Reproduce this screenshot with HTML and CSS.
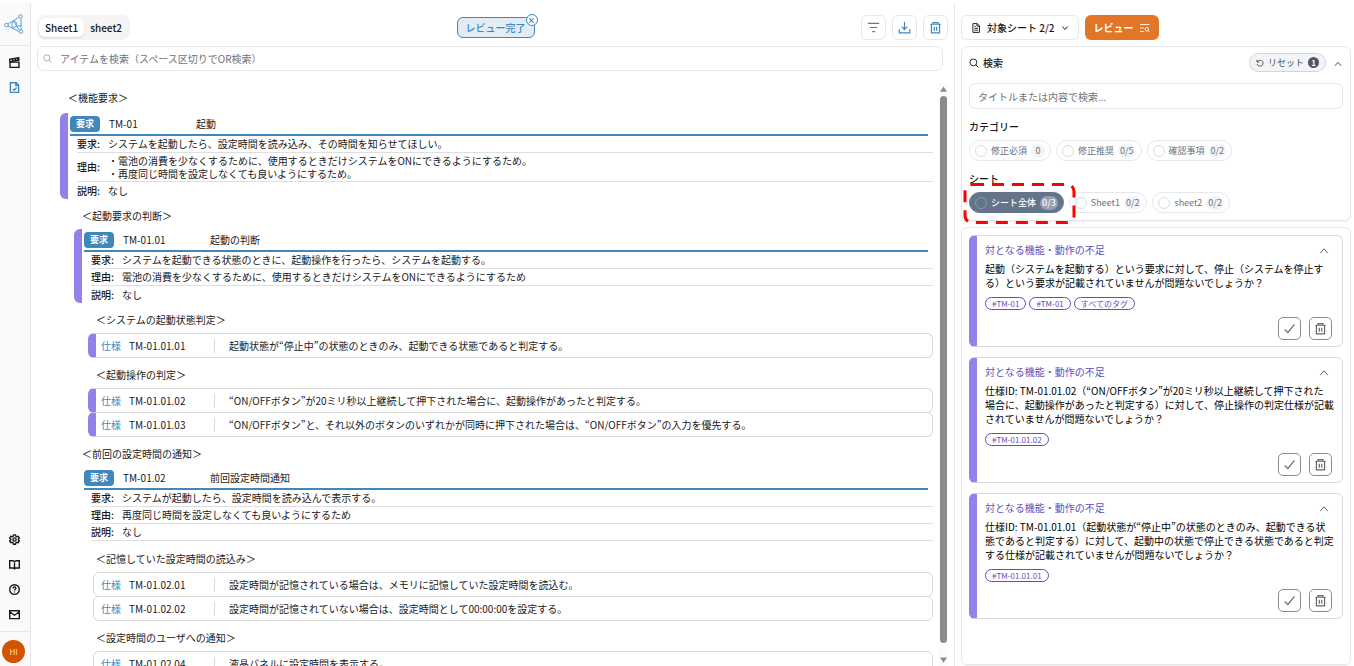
FILE: index.html
```html
<!DOCTYPE html>
<html lang="ja">
<head>
<meta charset="utf-8">
<title>レビュー</title>
<link rel="stylesheet" href="styles.css">
</head>
<body>
<svg class="defs" aria-hidden="true">
  <symbol id="i-trash" viewBox="0 0 16 16"><path d="M1.500 4h13M5 4V2h6v2M3 4v10.500h10V4M6.500 7v5M9.500 7v5"/></symbol>
  <symbol id="i-check" viewBox="0 0 16 16"><path d="M2 9l4 4 8-10"/></symbol>
  <symbol id="i-up" viewBox="0 0 16 16"><path d="M2 11.500l6-7 6 7"/></symbol>
  <symbol id="i-search" viewBox="0 0 16 16"><circle cx="7" cy="7" r="5.500"/><path d="M11 11l4 4"/></symbol>
</svg>
<div class="app">
  <nav class="rail" aria-label="メニュー">
    <a class="logo" href="#" aria-label="ホーム">
      <svg class="logo-svg" viewBox="0 0 20 20"><path d="M4 10L14.500 3.500M17 4.500v11.500M4 12l11 5.500M9 7.500a5 5 0 0 0 0 6.500M9 7.500c3-1 4 1 3.500 4.500L9 14M12.500 12H17M10 7l2.500 5 3 4.500"/><circle cx="2.500" cy="11" r="1.800"/><circle cx="16.500" cy="2.500" r="1.800"/><circle cx="17" cy="17.500" r="1.800"/></svg>
    </a>
    <a class="rail-item" href="#" aria-label="プロジェクト"><svg class="ico" viewBox="0 0 16 16"><path d="M1.500 7.500h13V15h-13z"/><path d="M1.500 7L1 3.500 14 1l.6 3.200z"/><path d="M4 3l2.500 3M8 2.200l2.500 3M11.500 1.600l2 2.800"/></svg></a>
    <a class="rail-item rail-active" href="#" aria-label="レビュー"><svg class="ico" viewBox="0 0 16 16"><path d="M2 1h8.500L14 4.500V15H2zM10 1v4h4M5.500 10l2 2 3.500-4"/></svg></a>
    <div class="rail-bottom">
      <a class="rail-item" href="#" aria-label="設定"><svg class="ico" viewBox="0 0 16 16"><circle cx="8" cy="8" r="2.300"/><path d="M6.500 1.200h3l.5 2 1.500.9 2-.6 1.500 2.600L13.500 7.500v1L15 10l-1.500 2.600-2-.6-1.500.9-.5 2h-3l-.5-2-1.500-.9-2 .6L1 10l1.500-1.500v-1L1 6l1.500-2.600 2 .6L6 3.200z"/></svg></a>
      <a class="rail-item" href="#" aria-label="マニュアル"><svg class="ico" viewBox="0 0 16 16"><path d="M1 2.500h5l2 1.500 2-1.500h5v10.500H10l-2 1.500L6 13H1zM8 4v10.500"/></svg></a>
      <a class="rail-item" href="#" aria-label="ヘルプ"><svg class="ico" viewBox="0 0 16 16"><circle cx="8" cy="8" r="7"/><path d="M6 6.500c0-3 4-2.500 4 0C10 8 8 8 8 9.500M8 11v1.300"/></svg></a>
      <a class="rail-item" href="#" aria-label="お問い合わせ"><svg class="ico" viewBox="0 0 16 16"><path d="M1 2.500h14V14H1zM1 4l7 5 7-5"/></svg></a>
      <div class="user"><button class="avatar" type="button">HI</button></div>
    </div>
  </nav>

  <main class="main">
    <header class="bar">
      <div class="tabs" role="tablist">
        <button class="tab tab-on" type="button" role="tab" aria-selected="true">Sheet1</button>
        <button class="tab" type="button" role="tab" aria-selected="false">sheet2</button>
      </div>
      <div class="status">
        <button class="status-btn" type="button">レビュー完了</button>
        <button class="status-x" type="button" aria-label="閉じる"><svg class="x-ico" viewBox="0 0 10 10"><path d="M2 2l6 6M8 2L2 8"/></svg></button>
      </div>
      <div class="tools">
        <button class="tool" type="button" aria-label="絞り込み"><svg class="tool-ico" viewBox="0 0 16 16"><path d="M1 3h14M3.500 8h9M6.500 13h3.500"/></svg></button>
        <button class="tool" type="button" aria-label="ダウンロード"><svg class="tool-ico" viewBox="0 0 16 16"><path d="M8 1v9M4.500 7L8 10.500 11.500 7M1.500 10v4.500h13V10"/></svg></button>
        <button class="tool" type="button" aria-label="削除"><svg class="tool-ico"><use href="#i-trash"/></svg></button>
      </div>
    </header>
    <label class="find">
      <svg class="find-ico"><use href="#i-search"/></svg>
      <input class="find-input" type="text" aria-label="アイテムを検索" placeholder="アイテムを検索（スペース区切りでOR検索）">
    </label>
    <div class="viewport">
      <div class="doc">
        <h2 class="group">＜機能要求＞</h2>
        <section class="req marked">
          <div class="req-head"><span class="badge">要求</span><span class="req-id">TM-01</span><span>起動</span></div>
          <div class="field"><span class="key">要求:</span><span>システムを起動したら、設定時間を読み込み、その時間を知らせてほしい。</span></div>
          <div class="field"><span class="key">理由:</span><span class="multi">・電池の消費を少なくするために、使用するときだけシステムをONにできるようにするため。<br>・再度同じ時間を設定しなくても良いようにするため。</span></div>
          <div class="field"><span class="key">説明:</span><span>なし</span></div>
        </section>
        <div class="level">
          <h3 class="group">＜起動要求の判断＞</h3>
          <section class="req marked">
            <div class="req-head"><span class="badge">要求</span><span class="req-id">TM-01.01</span><span>起動の判断</span></div>
            <div class="field"><span class="key">要求:</span><span>システムを起動できる状態のときに、起動操作を行ったら、システムを起動する。</span></div>
            <div class="field"><span class="key">理由:</span><span>電池の消費を少なくするために、使用するときだけシステムをONにできるようにするため</span></div>
            <div class="field"><span class="key">説明:</span><span>なし</span></div>
          </section>
          <div class="level">
            <h4 class="group">＜システムの起動状態判定＞</h4>
            <div class="spec spec-marked"><span class="kind">仕様</span><span class="spec-id">TM-01.01.01</span><span class="spec-text">起動状態が“停止中”の状態のときのみ、起動できる状態であると判定する。</span></div>
            <h4 class="group">＜起動操作の判定＞</h4>
            <div class="spec spec-marked"><span class="kind">仕様</span><span class="spec-id">TM-01.01.02</span><span class="spec-text">“ON/OFFボタン”が20ミリ秒以上継続して押下された場合に、起動操作があったと判定する。</span></div>
            <div class="spec spec-marked"><span class="kind">仕様</span><span class="spec-id">TM-01.01.03</span><span class="spec-text">“ON/OFFボタン”と、それ以外のボタンのいずれかが同時に押下された場合は、“ON/OFFボタン”の入力を優先する。</span></div>
          </div>
          <h3 class="group">＜前回の設定時間の通知＞</h3>
          <section class="req ruled">
            <div class="req-head"><span class="badge">要求</span><span class="req-id">TM-01.02</span><span>前回設定時間通知</span></div>
            <div class="field"><span class="key">要求:</span><span>システムが起動したら、設定時間を読み込んで表示する。</span></div>
            <div class="field"><span class="key">理由:</span><span>再度同じ時間を設定しなくても良いようにするため</span></div>
            <div class="field"><span class="key">説明:</span><span>なし</span></div>
          </section>
          <div class="level">
            <h4 class="group">＜記憶していた設定時間の読込み＞</h4>
            <div class="spec"><span class="kind">仕様</span><span class="spec-id">TM-01.02.01</span><span class="spec-text">設定時間が記憶されている場合は、メモリに記憶していた設定時間を読込む。</span></div>
            <div class="spec"><span class="kind">仕様</span><span class="spec-id">TM-01.02.02</span><span class="spec-text">設定時間が記憶されていない場合は、設定時間として00:00:00を設定する。</span></div>
            <h4 class="group">＜設定時間のユーザへの通知＞</h4>
            <div class="spec"><span class="kind">仕様</span><span class="spec-id">TM-01.02.04</span><span class="spec-text">液晶パネルに設定時間を表示する。</span></div>
          </div>
        </div>
      </div>
      <div class="scroll" aria-hidden="true">
        <svg class="arrow" viewBox="0 0 8 6"><path d="M4 0l4 6H0z"/></svg>
        <div class="thumb"></div>
        <svg class="arrow" viewBox="0 0 8 6"><path d="M4 6L0 0h8z"/></svg>
      </div>
    </div>
  </main>

  <aside class="side">
    <div class="side-bar">
      <button class="target" type="button" aria-haspopup="listbox">
        <svg class="ico" viewBox="0 0 16 16"><path d="M3 1h7l3.500 3.500V15H3zM9.500 1v4h4M5.500 5.500h2M5.500 8.500h5.500M5.500 11.500h5.500"/></svg>
        <span>対象シート 2/2</span>
        <svg class="ico-s" viewBox="0 0 16 16"><path d="M2.500 5L8 11l5.500-6"/></svg>
      </button>
      <button class="run" type="button"><span>レビュー</span><svg class="ico" viewBox="0 0 16 16"><path d="M0 2.500h15M0 8h6M0 13.500h6M13 12l2.500 2.500"/><circle cx="11" cy="10" r="2.800"/></svg></button>
    </div>

    <section class="panel filter">
      <div class="filter-head">
        <svg class="ico"><use href="#i-search"/></svg>
        <h2 class="filter-title">検索</h2>
        <button class="reset" type="button"><svg class="ico-s" viewBox="0 0 16 16"><path d="M2 1.500V6h4.500M2.500 5.500C5 1 14 1.500 14 8.500S4 15.500 2 10"/></svg><span>リセット</span><span class="count">1</span></button>
        <button class="fold" type="button" aria-label="折りたたむ"><svg class="ico-s"><use href="#i-up"/></svg></button>
      </div>
      <input class="side-input" type="text" aria-label="タイトルまたは内容で検索" placeholder="タイトルまたは内容で検索...">
      <h3 class="label">カテゴリー</h3>
      <div class="chips">
        <label class="chip"><input class="dot" type="checkbox">修正必須<span class="num">0</span></label>
        <label class="chip"><input class="dot" type="checkbox">修正推奨<span class="num">0/5</span></label>
        <label class="chip"><input class="dot" type="checkbox">確認事項<span class="num">0/2</span></label>
      </div>
      <h3 class="label">シート</h3>
      <div class="chips">
        <div class="callout">
          <label class="chip chip-on"><input class="dot" type="checkbox" checked>シート全体<span class="num">0/3</span></label>
          <svg class="dash" viewBox="0 0 112 41"><rect x="1.500" y="1.500" width="109" height="38" rx="7"/></svg>
        </div>
        <label class="chip"><input class="dot" type="checkbox">Sheet1<span class="num">0/2</span></label>
        <label class="chip"><input class="dot" type="checkbox">sheet2<span class="num">0/2</span></label>
      </div>
    </section>

    <section class="panel results">
      <article class="card">
        <div class="card-head"><h3 class="card-title">対となる機能・動作の不足</h3><button class="fold" type="button" aria-label="折りたたむ"><svg class="ico"><use href="#i-up"/></svg></button></div>
        <p class="card-text">起動（システムを起動する）という要求に対して、停止（システムを停止する）という要求が記載されていませんが問題ないでしょうか？</p>
        <div class="tags"><a class="tag" href="#">#TM-01</a><a class="tag" href="#">#TM-01</a><a class="tag" href="#">すべてのタグ</a></div>
        <div class="acts"><button class="act" type="button" aria-label="完了"><svg class="act-ico"><use href="#i-check"/></svg></button><button class="act" type="button" aria-label="削除"><svg class="act-ico"><use href="#i-trash"/></svg></button></div>
      </article>
      <article class="card">
        <div class="card-head"><h3 class="card-title">対となる機能・動作の不足</h3><button class="fold" type="button" aria-label="折りたたむ"><svg class="ico"><use href="#i-up"/></svg></button></div>
        <p class="card-text">仕様ID: TM-01.01.02（“ON/OFFボタン”が20ミリ秒以上継続して押下された<br>場合に、起動操作があったと判定する）に対して、停止操作の判定仕様が記載されていませんが問題ないでしょうか？</p>
        <div class="tags"><a class="tag" href="#">#TM-01.01.02</a></div>
        <div class="acts"><button class="act" type="button" aria-label="完了"><svg class="act-ico"><use href="#i-check"/></svg></button><button class="act" type="button" aria-label="削除"><svg class="act-ico"><use href="#i-trash"/></svg></button></div>
      </article>
      <article class="card">
        <div class="card-head"><h3 class="card-title">対となる機能・動作の不足</h3><button class="fold" type="button" aria-label="折りたたむ"><svg class="ico"><use href="#i-up"/></svg></button></div>
        <p class="card-text">仕様ID: TM-01.01.01（起動状態が“停止中”の状態のときのみ、起動できる状<br>態であると判定する）に対して、起動中の状態で停止できる状態であると判定する仕様が記載されていませんが問題ないでしょうか？</p>
        <div class="tags"><a class="tag" href="#">#TM-01.01.01</a></div>
        <div class="acts"><button class="act" type="button" aria-label="完了"><svg class="act-ico"><use href="#i-check"/></svg></button><button class="act" type="button" aria-label="削除"><svg class="act-ico"><use href="#i-trash"/></svg></button></div>
      </article>
    </section>
  </aside>
</div>
</body>
</html>
```

FILE: styles.css
```css
:root {
  --blue: #4088bc;
  --purple: #9281e8;
  --indigo: #5b50bd;
  --line: #e5e7eb;
  --ink: #18181b;
}
* { box-sizing: border-box; }
body {
  margin: 0;
  background: #fff;
  color: var(--ink);
  font: 400 10px/14px "Noto Sans CJK JP", "Noto Sans", sans-serif;
}
button, input { font: inherit; color: inherit; margin: 0; padding: 0; }
button { background: none; border: 0; cursor: pointer; }
h2, h3, h4, p { margin: 0; font-size: 10px; font-weight: 400; }
a { text-decoration: none; color: inherit; }
svg { fill: none; stroke: currentColor; stroke-width: 1.5; flex: none; display: block; }
.defs { position: absolute; width: 0; height: 0; }
.ico { width: 10px; height: 10px; }
.ico-s { width: 8px; height: 8px; stroke-width: 2; }

.app {
  display: grid;
  grid-template-columns: 31px minmax(0, 1fr) 400px;
  height: 100vh;
  padding-top: 3px;
  overflow: hidden;
}

/* navigation rail */
.rail {
  display: flex;
  flex-direction: column;
  align-items: stretch;
  background: #fafafa;
  border-right: 1px solid var(--line);
}
.logo {
  display: grid;
  place-items: center;
  height: 43px;
  margin-bottom: 4px;
  padding-right: 2px;
  border-bottom: 1px solid var(--line);
  color: #5a9fd4;
}
.logo-svg { width: 20px; height: 20px; stroke-width: 1; }
.rail-item {
  display: grid;
  place-items: center;
  height: 25px;
  padding-right: 2px;
}
.rail .ico { width: 11px; height: 11px; stroke-width: 2; }
.rail-active { color: var(--blue); }
.rail-bottom { margin-top: auto; }
.user {
  margin-top: 4px;
  padding: 8px 3px 3px 2px;
  border-top: 1px solid var(--line);
}
.avatar {
  display: block;
  width: 23px;
  height: 23px;
  border-radius: 50%;
  background: #d35400;
  color: #fbe3d3;
  font-size: 8px;
}

/* main column */
.main { display: flex; flex-direction: column; min-height: 0; padding: 12px 6px 0 6px; }
.bar { display: flex; justify-content: space-between; align-items: center; height: 25px; }
.tabs { display: flex; padding: 3px 2px; border-radius: 8px; background: #f4f4f5; }
.tab { height: 19px; padding: 0 6px; border-radius: 6px; font-weight: 500; }
.tab-on { background: #fff; box-shadow: 0 1px 2px rgba(0, 0, 0, .12); }
.status { position: relative; color: var(--blue); }
.status-btn {
  height: 21px;
  padding: 0 8px;
  border: 1px solid var(--blue);
  border-radius: 6px;
  background: #e2ecf5;
  font-weight: 500;
}
.status-x {
  position: absolute;
  top: -3px;
  right: -3px;
  width: 12px;
  height: 12px;
  display: grid;
  place-items: center;
  border: 1px solid var(--blue);
  border-radius: 50%;
  background: #fff;
}
.x-ico { width: 7px; height: 7px; }
.tools { display: flex; gap: 6px; color: var(--blue); }
.tool {
  display: grid;
  place-items: center;
  width: 25px;
  height: 25px;
  border: 1px solid var(--line);
  border-radius: 6px;
}
.tool-ico { width: 13px; height: 13px; }
.find {
  display: flex;
  align-items: center;
  gap: 8px;
  height: 25px;
  margin: 6px 5px 0 0;
  padding: 0 5px;
  border: 1px solid var(--line);
  border-radius: 6px;
}
.find-ico { width: 9px; height: 9px; color: #a1a1aa; }
.find-input { flex: 1; border: 0; outline: 0; background: none; }
::placeholder { color: #717179; opacity: 1; }

.viewport { flex: 1; display: flex; min-height: 0; margin-top: 12px; overflow: hidden; }
.doc { flex: 1; padding-left: 23px; margin-right: 5px; }
.scroll {
  display: flex;
  flex-direction: column;
  align-items: center;
  gap: 4px;
  width: 10px;
  padding: 3px 0;
  background: #fcfcfc;
}
.arrow { width: 7px; height: 6px; fill: #8b8b8b; stroke: none; }
.thumb { flex: 1; width: 7px; margin-bottom: 10px; border-radius: 4px; background: #8b8b8b; }

/* requirement tree */
.level { padding-left: 14px; }
.group { padding: 10px 0 6px 8px; }
h2.group { padding: 8px 0 8px 8px; }
.req { padding-left: 10px; }
.marked {
  background: linear-gradient(var(--purple), var(--purple)) left / 8px 100% no-repeat;
  border-radius: 6px 0 0 6px;
}
.ruled { padding-bottom: 1px; }
.req-head {
  display: grid;
  grid-template-columns: 39px 87px 1fr;
  align-items: center;
  height: 23px;
  margin-right: 5px;
  border-bottom: 2px solid var(--blue);
}
.badge {
  justify-self: start;
  padding: 1px 6px;
  border-radius: 4px;
  background: var(--blue);
  color: #fff;
  font-size: 9px;
  font-weight: 700;
}
.field {
  display: grid;
  grid-template-columns: 31px 1fr;
  align-items: center;
  min-height: 17px;
  margin-left: 7px;
  border-bottom: 1px solid #dfdfdf;
}
.marked .field:last-child { border-bottom: 0; }
.key { font-weight: 500; }
.multi { line-height: 13px; padding: 1px 0; }
.spec {
  display: grid;
  grid-template-columns: 28px 85px 1fr;
  align-items: center;
  height: 25px;
  margin-left: 5px;
  padding-left: 7px;
  border: 1px solid #d9d9d9;
  border-radius: 6px;
}
.spec + .spec { margin-top: -1px; }
.spec-marked {
  margin-left: 0;
  padding-left: 5px;
  border-left: 8px solid var(--purple);
}
.kind { color: var(--blue); }
.spec-text { padding-left: 14px; border-left: 1px solid #d9d9d9; }

/* review column */
.side {
  display: flex;
  flex-direction: column;
  gap: 6px;
  min-height: 0;
  padding: 12px 3px 1px 6px;
  border-left: 1px solid var(--line);
}
.side-bar { display: flex; gap: 6px; }
.target, .run {
  display: flex;
  align-items: center;
  gap: 6px;
  height: 25px;
  padding: 0 9px;
  border-radius: 6px;
  font-weight: 500;
}
.target { border: 1px solid var(--line); }
.run { background: #e17629; color: #fff; font-weight: 700; }
.panel { border: 1px solid var(--line); border-radius: 6px; box-shadow: 0 1px 1px rgba(0, 0, 0, .05); }
.filter { padding: 6px 7px 7px; }
.filter-head { display: flex; align-items: center; gap: 4px; height: 19px; }
.filter-title { margin-right: auto; font-weight: 500; }
.reset {
  display: flex;
  align-items: center;
  gap: 4px;
  height: 19px;
  padding: 0 6px;
  border: 1px solid #d1d5db;
  border-radius: 10px;
  background: #f3f4f6;
  color: #4b5563;
  font-size: 9px;
}
.count {
  width: 11px;
  height: 11px;
  border-radius: 50%;
  background: #4b5563;
  color: #fff;
  font-size: 8px;
  font-weight: 700;
  line-height: 11px;
}
.fold { color: #52525b; }
.filter .fold { padding: 2px 1px 0 4px; }
.side-input {
  display: block;
  width: 100%;
  height: 26px;
  margin: 11px 0;
  padding: 0 8px;
  border: 1px solid var(--line);
  border-radius: 6px;
}
.label { font-weight: 500; }
.chips { display: flex; gap: 5px; margin: 6px 0 11px; }
.chips:last-child { margin-bottom: 0; }
.chip {
  display: flex;
  align-items: center;
  gap: 4px;
  height: 21px;
  padding: 0 5px;
  border: 1px solid var(--line);
  border-radius: 11px;
  color: #6b7280;
  font-size: 9px;
}
.dot {
  appearance: none;
  width: 12px;
  height: 12px;
  border: 1px solid #d8dbe0;
  border-radius: 50%;
}
.num {
  min-width: 14px;
  padding: 0 2px;
  border-radius: 7px;
  background: #f3f4f6;
  line-height: 14px;
  text-align: center;
}
.chip-on { background: #64748b; border-color: #64748b; color: #fff; font-weight: 500; }
.chip-on .dot { border-color: #8b98aa; }
.chip-on .num { background: #94a0b1; }
.callout { position: relative; }
.dash {
  position: absolute;
  left: -6px;
  top: -9px;
  width: 113px;
  height: 41px;
  pointer-events: none;
  stroke: #f00;
  stroke-width: 3;
  stroke-dasharray: 12 8;
}

/* review results */
.results { flex: 1; display: flex; flex-direction: column; gap: 10px; min-height: 0; padding: 7px; overflow: hidden; }
.card {
  padding: 7px 5px 6px 8px;
  border: 1px solid #d9dae3;
  border-left: 8px solid var(--purple);
  border-radius: 6px;
}
.card-head { display: flex; justify-content: space-between; align-items: center; }
.card-title { color: var(--indigo); }
.card-head .fold { padding: 2px 8px 0 0; }
.card-text { margin-top: 5px; color: #000; }
.tags { display: flex; gap: 3px; margin: 7px 0; }
.tag {
  padding: 0 6px;
  border: 1px solid var(--indigo);
  border-radius: 7px;
  color: var(--indigo);
  font-size: 8px;
  line-height: 11px;
}
.acts { display: flex; justify-content: flex-end; gap: 8px; padding-right: 5px; }
.act {
  display: grid;
  place-items: center;
  width: 23px;
  height: 23px;
  border: 1px solid #8c8c8c;
  border-radius: 5px;
  color: #666;
}
.act-ico { width: 13px; height: 13px; }
```
